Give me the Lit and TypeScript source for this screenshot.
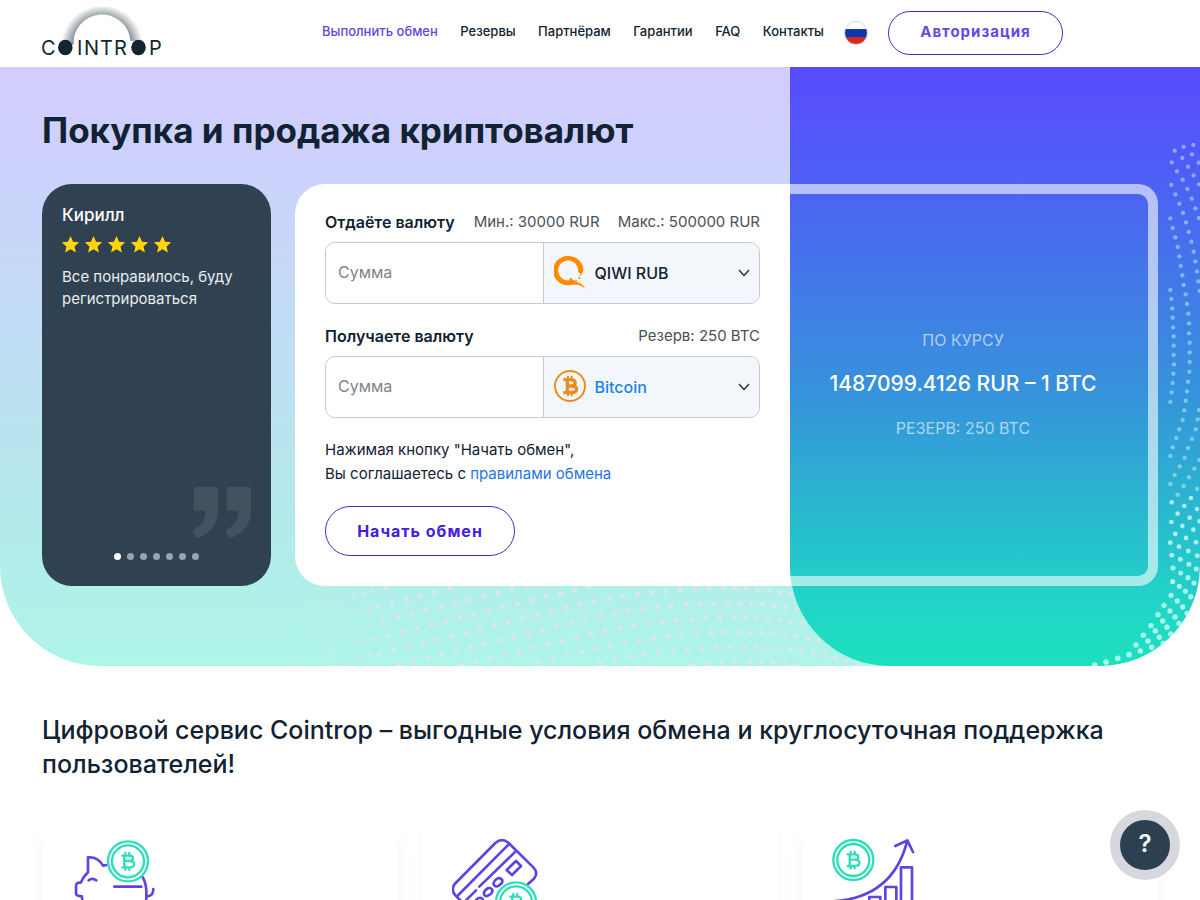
import { LitElement, html, svg, css } from "lit";
import { customElement } from "lit/decorators.js";

// Curved dot trails at the right edge of the hero, in thirds of a pixel.
const edgeTrails: number[][][] = [
  [[1241,51],[1266,73],[1286,98],[1270,45]],
  [[1214,62],[1237,84],[1254,110],[1271,136],[1287,163]],
  [[1205,97],[1221,124],[1238,149],[1252,177],[1265,206],[1276,235],[1287,264]],
  [[1204,165],[1216,193],[1228,221],[1239,249],[1248,277],[1256,306],[1264,335],[1271,365],[1276,394],[1281,424],[1285,454],[1289,483]],
  [[1201,265],[1208,294],[1216,322],[1223,351],[1228,379],[1232,408],[1237,436],[1241,465],[1247,493],[1251,522],[1255,551],[1257,580],[1257,610],[1259,638],[1259,667],[1259,696],[1258,725],[1254,755],[1251,784],[1247,812],[1243,841],[1238,870],[1228,898],[1219,924],[1208,952],[1201,978]],
  [[1201,480],[1204,507],[1207,535],[1208,563],[1209,592],[1211,619],[1211,647],[1211,675],[1212,703],[1210,731],[1208,759],[1205,787],[1201,816]],
  [[1287,840],[1283,868],[1277,898],[1266,927],[1254,954],[1244,983],[1229,1009],[1214,1035],[1201,1062]],
  [[1288,990],[1273,1016],[1257,1042],[1241,1068],[1223,1094],[1205,1117]],
  [[1281,1077],[1263,1104],[1243,1128],[1223,1151],[1204,1176]],
  [[1281,1137],[1259,1163],[1237,1188],[1216,1212],[1201,1238]],
  [[1289,1174],[1270,1199],[1248,1224],[1227,1250],[1205,1276]],
  [[1278,1237],[1255,1263],[1231,1288],[1209,1314]],
  [[1282,1277],[1257,1303],[1232,1329],[1208,1355]],
  [[1279,1317],[1254,1343],[1228,1369],[1203,1396],[1182,1426],[1164,1454],[1143,1487],[1120,1516],[1098,1545],[1077,1574],[1043,1585],[1008,1596],[974,1605]],
  [[1272,1359],[1246,1384],[1222,1413],[1200,1443],[1178,1473],[1156,1503],[1134,1533],[1111,1563]],
  [[1262,1400],[1238,1431],[1215,1461],[1191,1492],[1168,1522],[1145,1552]],
  [[1251,1450],[1227,1480],[1202,1512],[1180,1540]],
];

const edgeDots = edgeTrails.flat().map(([x, y]) => svg`
  <circle cx=${x} cy=${y} r=${6.5 + Math.max(0, (y - 1000) / 300)} opacity=${y > 1100 ? 0.75 : 0.45}></circle>`);

// Rows of dots that rise from the left, crest and fall again, in thirds of a pixel.
const waveDots = Array.from({ length: 13 }, (_, row) => {
  const dots = [];
  const crest = 1340 + (row - 7) * 16;
  let x = crest + 330;
  while (x > 30) {
    const d = x - crest;
    const rise = d > 0 ? (d * d) / 2100 : d > -420 ? (d * d) / 4100 : 43 + (-d - 420) * 0.245;
    const y = 13 + (row - 7) * 44 + rise;
    if (y > 2 && y < 244) {
      dots.push(svg`<circle cx=${x} cy=${y} r=${x < 240 ? 5 : 7.5} opacity=${Math.min(0.95, Math.max(0.15, x / 380))}></circle>`);
    }
    x -= d > 0 ? 34 : x > 300 ? 43 : x > 220 ? 28 : 17;
  }
  return dots;
});

const coin = (cx: number, cy: number) => svg`
  <g class="mint" transform="translate(${cx} ${cy})">
    <circle r="60"></circle><circle r="48"></circle>
    <path d="M-17-17H4C19-17 19-1 4-1H-11M4-1C23-1 23 18 4 18H-17M-11-17V18M-8-25V-17M4-25V-17M-8 18V25M4 18V25"></path>
  </g>`;

const icons = [
  html`<svg class="art" viewBox="126 114 270 270" aria-hidden="true">
    <path d="M230 195L219 197Q204 170 174 172V217Q160 230 152 248Q138 246 138 260V280Q138 289 156 289Q156 340 200 352V376H235V356H290V376H325V350Q350 330 349 296V270Q347 246 338 232M176 241Q187 232 199 241M253 260H334M349 289Q370 290 370 267"></path>
    ${coin(294, 184)}</svg>`,
  html`<svg class="art" viewBox="156 114 270 270" aria-hidden="true">
    <path d="M164 252L286 129Q306 112 326 129L400 202Q416 218 402 236L384 252M164 252Q152 270 166 286L244 362Q262 376 282 362M326 133L172 288M347 154L238 260M228 271L198 301M348 183L363 198L336 225L320 210ZM284 243Q294 229 305 238Q311 246 300 254Q290 264 283 256Q278 250 284 243ZM255 272Q265 259 275 267Q281 275 271 283Q260 292 254 286Q249 279 255 272ZM226 303Q236 288 247 296Q252 303 241 313"></path>
    <circle cx="348" cy="310" r="60" fill="#fff" stroke="none"></circle>${coin(348, 307)}</svg>`,
  html`<svg class="art" viewBox="126 114 270 270" aria-hidden="true">
    <path d="M130 304Q310 292 352 121M316 138L352 121L369 156M190 370V330H222V370M238 370V291H271V370M286 370V261H319V370M333 370V202H366V370"></path>
    ${coin(190, 180)}</svg>`,
];

const star = html`<svg class="star" viewBox="0 0 16 16" aria-hidden="true"><path d="M8 0l2.4 5.5 5.800.5-4.400 3.900L13.100 15.500 8 12.500 2.900 15.500 4.200 9.900-.2 6l5.800-.5z"></path></svg>`;

const chevron = html`<svg class="chevron" viewBox="0 0 12 8" aria-hidden="true"><path d="M1 1l5 5.500L11 1"></path></svg>`;

@customElement("app-root")
export class AppRoot extends LitElement {
  static styles = css`
    :host {
      display: block;
      height: 100vh;
      overflow: hidden auto;
      scrollbar-width: none;
      background: #fff;
      color: #112233;
      font: 400 15px/24px Inter, "Noto Sans", sans-serif;
    }
    * { box-sizing: border-box; }
    h1, h2, p { margin: 0; }
    a { color: inherit; text-decoration: none; }
    button, input, select { font: inherit; color: inherit; margin: 0; }
    button { cursor: pointer; }
    .top { display: flex; align-items: center; height: 67px; padding: 0 42px 2px; }
    .logo { flex: 0 0 280px; height: 48px; }
    .logo svg { display: block; width: 120px; height: 48px; overflow: visible; }
    .logo text { font: 400 20px Inter, sans-serif; fill: #112631; }
    .nav { flex: 0 1 502px; display: flex; justify-content: space-between; padding-bottom: 4px; font-size: 13px; font-weight: 500; white-space: nowrap; }
    .nav .current { color: #5f48e0; }
    .flag { width: 24px; height: 24px; margin: 0 20px; padding: 0; border: 1px solid #d8d8e0; border-radius: 50%; background: linear-gradient(#fff 33%, #0a36b4 33% 66%, #d82a20 66%); flex: none; }
    .pill { border: 1px solid #4c2cc4; background: transparent; color: #4420dc; border-radius: 25px; font-weight: 700; letter-spacing: 1px; padding-bottom: 2px; }
    .login { width: 175px; height: 44px; color: #6549e5; flex: none; }
    .hero { position: relative; padding: 41px 42px 80px; border-radius: 0 0 100px 100px; overflow: hidden; background: linear-gradient(#d3ccfd, #cbd3fb 20%, #b3ebeb 78%, #aef5e8); }
    .pane { position: absolute; inset: 0 0 0 auto; width: 410px; border-radius: 0 0 100px 100px; background: linear-gradient(#584bfe, #505bf6 15%, #3595da 56%, #20d6c6 90%, #1de0bd); }
    .wave { position: absolute; right: 290px; bottom: 0; width: 630px; height: 82px; fill: #dae5f2; }
    .edge { position: absolute; right: 0; bottom: 0; width: 430px; height: 536px; fill: #d8fff8; }
    .hero h1 { position: relative; font-size: 35px; line-height: 44px; font-weight: 700; margin-bottom: 32px; }
    .board { position: relative; display: grid; grid-template-columns: 229px 1fr 368px; }
    .review { display: flex; flex-direction: column; padding: 20px 20px 26px; border-radius: 30px; background: #304152; color: #fff; }
    .name { font-size: 17px; line-height: 22px; font-weight: 500; }
    .stars { display: flex; gap: 6px; margin: 10px 0 13px; }
    .star { width: 17px; height: 17px; fill: #ffd50a; }
    .quote-text { line-height: 22px; color: #e8edf0; }
    .mark { width: 58px; height: 51px; margin: auto 0 15px auto; fill: #42535f; }
    .dots { display: flex; gap: 6px; justify-content: center; }
    .dot { width: 7px; height: 7px; padding: 0; border: 0; border-radius: 50%; background: #98a3b3; }
    .dot.on { background: #fff; }
    .form { margin-left: 24px; padding: 26px 30px 30px; background: #fff; border-radius: 30px 0 0 30px; }
    .line { display: flex; justify-content: space-between; gap: 12px; margin-bottom: 8px; white-space: nowrap; }
    .line label { font-size: 16px; font-weight: 600; }
    .limits { display: flex; gap: 18px; color: #4b5157; }
    .field { display: grid; grid-template-columns: 1fr 1fr; height: 62px; margin-bottom: 20px; border: 1px solid #c4cacf; border-radius: 10px; overflow: hidden; }
    .field input { min-width: 0; border: 0; padding: 0 12px 2px; background: #fff; font-size: 16px; outline: none; }
    .field input::placeholder { color: #808488; opacity: 1; }
    .pick { position: relative; display: grid; border-left: 1px solid #c4cacf; background: #f3f7fb; }
    .pick select { appearance: none; border: 0; background: transparent; padding: 0 30px 0 51px; font-size: 16px; font-weight: 500; width: 100%; outline: none; }
    .pick.blue select { color: #1d84e8; }
    .coin { position: absolute; left: 10px; top: 13px; width: 32px; height: 33px; pointer-events: none; }
    .chevron { position: absolute; right: 9px; top: 26px; width: 12px; height: 8px; fill: none; stroke: #222c35; stroke-width: 1.4; pointer-events: none; }
    .terms a { color: #1f75e0; }
    .start { display: block; margin-top: 20px; width: 190px; height: 50px; font-size: 16px; }
    .rate { display: flex; flex-direction: column; align-items: center; justify-content: center; gap: 20px; border: 10px solid rgba(255,255,255,.6); border-left: 0; border-radius: 0 20px 20px 0; padding: 0 12px 2px 0; color: rgba(255,255,255,.6); font-size: 16px; }
    .rate strong { color: #fff; font-size: 21px; font-weight: 500; white-space: nowrap; }
    .about { padding: 47px 42px 40px; }
    .about h2 { font-size: 25px; line-height: 34px; font-weight: 500; }
    .cards { display: grid; grid-template-columns: repeat(3, 1fr); gap: 24px; margin-top: 37px; }
    .card { padding: 20px 30px 60px; border-radius: 20px; background: #fff; box-shadow: 0 10px 16px rgba(0,0,0,.04); }
    .art { display: block; width: 90px; height: 90px; fill: none; stroke: #5e45e2; stroke-width: 8; stroke-linecap: round; stroke-linejoin: round; }
    .mint { stroke: #2bdfb8; stroke-width: 7; fill: none; }
    .help { position: fixed; right: 20px; bottom: 20px; width: 70px; height: 70px; padding: 0 0 2px; border: 10px solid #d6d8dd; border-radius: 50%; background: #2d4051; color: #fff; font-size: 24px; font-weight: 600; }
  `;

  render() {
    return html`
      <header class="top">
        <a class="logo" href="#" aria-label="Cointrop">
          <svg viewBox="0 0 120 48">
            <defs>
              <radialGradient id="halo" gradientUnits="userSpaceOnUse" cx="60" cy="37" r="41">
                <stop offset=".68" stop-color="#112631" stop-opacity=".55"></stop>
                <stop offset="1" stop-color="#112631" stop-opacity="0"></stop>
              </radialGradient>
            </defs>
            <path d="M19 36A41 39 0 0 1 101 36L96 32H88.500A28.500 28.500 0 0 0 31.500 36L22 34Z" fill="url(#halo)"></path>
            <text x="-1" y="46">C</text>
            <text x="35" y="46">I</text><text x="42" y="46">N</text><text x="58" y="46">T</text><text x="72" y="46">R</text>
            <text x="107" y="46">P</text>
            <ellipse cx="23.300" cy="38.500" rx="7.300" ry="7.700" fill="#112631"></ellipse>
            <ellipse cx="96.500" cy="38.500" rx="7.300" ry="7.700" fill="#112631"></ellipse>
          </svg>
        </a>
        <nav class="nav">
          <a class="current" href="#">Выполнить обмен</a><a href="#">Резервы</a><a href="#">Партнёрам</a>
          <a href="#">Гарантии</a><a href="#">FAQ</a><a href="#">Контакты</a>
        </nav>
        <button class="flag" aria-label="Русский"></button>
        <button class="pill login">Авторизация</button>
      </header>

      <section class="hero">
        <svg class="wave" viewBox="0 0 1890 246" aria-hidden="true">${waveDots}</svg>
        <div class="pane"></div>
        <svg class="edge" viewBox="0 0 1290 1608" aria-hidden="true">${edgeDots}</svg>
        <h1>Покупка и продажа криптовалют</h1>
        <div class="board">
          <article class="review">
            <div class="name">Кирилл</div>
            <div class="stars">${[1, 2, 3, 4, 5].map(() => star)}</div>
            <p class="quote-text">Все понравилось, буду регистрироваться</p>
            <svg class="mark" viewBox="0 0 174 153" aria-hidden="true">
              ${[0, 99].map((x) => svg`<path transform="translate(${x} 0)" d="M10 0H68Q75 0 75 7V72Q75 126 18 152Q11 155 7 148L1 137Q-3 128 5 126Q38 112 37 71H10Q2 71 2 63V8Q2 0 10 0Z"></path>`)}
            </svg>
            <div class="dots">${[0, 1, 2, 3, 4, 5, 6].map((i) => html`<button class="dot ${i ? "" : "on"}" aria-label="Отзыв ${i + 1}"></button>`)}</div>
          </article>

          <form class="form" @submit=${(e: Event) => e.preventDefault()}>
            <div class="line"><label for="give">Отдаёте валюту</label>
              <div class="limits"><span>Мин.: 30000 RUR</span><span>Макс.: 500000 RUR</span></div></div>
            <div class="field">
              <input id="give" placeholder="Сумма">
              <div class="pick">
                <svg class="coin" viewBox="0 0 96 99" aria-hidden="true">
                  <path fill="#ff8c00" fill-rule="evenodd" d="M44 0A44 44 0 1 0 50 87Q76 82 94 99Q88 84 70 79Q62 75 52 68L55 66Q45 63 46 73A30 30 0 1 1 72 49L79 52L76 62Q98 42 80 18Q66 0 44 0Z"></path>
                  <circle cx="76" cy="66" r="3" fill="#ff8c00"></circle><circle cx="66" cy="74" r="3" fill="#ff8c00"></circle>
                </svg>
                <select aria-label="Отдаёте валюту"><option>QIWI RUB</option></select>${chevron}
              </div>
            </div>
            <div class="line"><label for="get">Получаете валюту</label>
              <div class="limits"><span>Резерв: 250 BTC</span></div></div>
            <div class="field">
              <input id="get" placeholder="Сумма">
              <div class="pick blue">
                <svg class="coin" viewBox="0 0 96 99" aria-hidden="true">
                  <g fill="none" stroke="#ee8b20"><circle cx="48" cy="48" r="45" stroke-width="6"></circle>
                  <path stroke-width="10" d="M28 29H50C68 29 68 48 50 48H40M50 48C74 48 74 68 50 68H28M40 29V68"></path>
                  <path stroke-width="6" d="M42 17V28M53 17V28M42 69V79M53 69V79"></path></g>
                </svg>
                <select aria-label="Получаете валюту"><option>Bitcoin</option></select>${chevron}
              </div>
            </div>
            <p class="terms">Нажимая кнопку "Начать обмен",<br>Вы соглашаетесь с <a href="#">правилами обмена</a></p>
            <button class="pill start">Начать обмен</button>
          </form>

          <div class="rate"><span>ПО КУРСУ</span><strong>1487099.4126 RUR – 1 BTC</strong><span>РЕЗЕРВ: 250 BTC</span></div>
        </div>
      </section>

      <section class="about">
        <h2>Цифровой сервис Cointrop – выгодные условия обмена и круглосуточная поддержка пользователей!</h2>
        <div class="cards">${icons.map((icon) => html`<div class="card">${icon}</div>`)}</div>
      </section>
      <button class="help" aria-label="Помощь">?</button>
    `;
  }
}
